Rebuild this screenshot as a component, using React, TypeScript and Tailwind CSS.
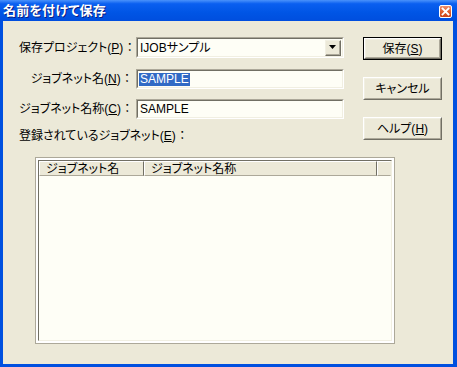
import type { ReactNode } from "react"

const ui = "font-['Liberation_Sans','Noto_Sans_CJK_JP',sans-serif] [font-feature-settings:'palt']"

function Key({ children }: { children: ReactNode }) {
  return <span className="underline underline-offset-[1px]">{children}</span>
}

function Sunken({ className, children }: { className?: string; children?: ReactNode }) {
  return (
    <div
      className={`border border-t-[#aca899] border-l-[#aca899] border-b-white border-r-white ${className ?? ""}`}
    >
      <div className="h-full border border-t-[#716f64] border-l-[#716f64] border-b-[#f1efe2] border-r-[#f1efe2] bg-[#fefef6]">
        {children}
      </div>
    </div>
  )
}

function Button({ children, isDefault }: { children: ReactNode; isDefault?: boolean }) {
  const inner = (
    <div className="h-full border border-t-white border-l-white border-b-[#716f64] border-r-[#716f64]">
      <div className="flex h-full items-center justify-center border border-t-[#f1efe2] border-l-[#f1efe2] border-b-[#aca899] border-r-[#aca899] text-[12px] text-black">
        {children}
      </div>
    </div>
  )
  return (
    <div className={`h-[23px] w-[79px] ${isDefault ? "border border-black" : ""}`}>{inner}</div>
  )
}

function FieldRow({ label, children, className }: { label: ReactNode; children: ReactNode; className?: string }) {
  return (
    <div className={`flex items-center ${className ?? ""}`}>
      <div className="w-[111px] text-right text-[12px] leading-none whitespace-nowrap text-black">{label}</div>
      <div className="ml-[6px]">{children}</div>
    </div>
  )
}

export default function App() {
  return (
    <div className={`flex h-[367px] w-[457px] flex-col bg-[#0050e0] ${ui}`}>
      <div className="flex h-[21px] items-center justify-between bg-[linear-gradient(180deg,#4a92fb_0%,#0a5ff0_18%,#0055e5_60%,#004ede_100%)] pl-[3px] pr-[5px]">
        <span className="text-[13px] font-bold leading-none tracking-[0.2px] text-white [text-shadow:1px_1px_0_#0a1e80]">
          名前を付けて保存
        </span>
        <div className="mt-[1px] flex h-[13px] w-[13px] items-center justify-center rounded-[2px] border border-white bg-[linear-gradient(180deg,#ee9070_0%,#e0602f_50%,#c8431a_100%)]">
          <svg width="9" height="9" viewBox="0 0 9 9">
            <path d="M1.5 1.5 L7.5 7.5 M7.5 1.5 L1.5 7.5" stroke="white" strokeWidth="1.8" strokeLinecap="square" />
          </svg>
        </div>
      </div>

      <div className="mb-[3px] ml-[3px] mr-[4px] flex-1 bg-[#ece9d8]">
        <div className="flex items-start pt-[16px]">
          <div className="w-[357px] pl-[16px]">
            <FieldRow
              label={
                <>
                  保存プロジェクト(<Key>P</Key>) ：
                </>
              }
            >
              <Sunken className="h-[21px] w-[208px]">
                <div className="flex h-full items-center justify-between">
                  <span className="pl-[2px] text-[12px] leading-none text-black">IJOBサンプル</span>
                  <div className="mr-px h-[16px] w-[16px] border border-t-[#f1efe2] border-l-[#f1efe2] border-b-[#716f64] border-r-[#716f64] bg-[#ece9d8]">
                    <div className="flex h-full items-center justify-center border-b border-r border-b-[#aca899] border-r-[#aca899]">
                      <svg width="7" height="4" viewBox="0 0 7 4">
                        <path d="M0 0 H7 L3.5 4 Z" fill="black" />
                      </svg>
                    </div>
                  </div>
                </div>
              </Sunken>
            </FieldRow>

            <FieldRow
              className="mt-[11px]"
              label={
                <>
                  ジョブネット名(<Key>N</Key>) ：
                </>
              }
            >
              <Sunken className="h-[20px] w-[208px]">
                <div className="flex h-full items-center pl-[1px]">
                  <span className="bg-[#316ac5] px-px text-[12px] leading-[13px] text-white">SAMPLE</span>
                </div>
              </Sunken>
            </FieldRow>

            <FieldRow
              className="mt-[10px]"
              label={
                <>
                  ジョブネット名称(<Key>C</Key>) ：
                </>
              }
            >
              <Sunken className="h-[20px] w-[208px]">
                <div className="flex h-full items-center pl-[2px]">
                  <span className="text-[12px] leading-none text-black">SAMPLE</span>
                </div>
              </Sunken>
            </FieldRow>

            <div className="mt-[10px] h-[14px] text-[12px] leading-[14px] whitespace-nowrap text-black">
              登録されているジョブネット(<Key>E</Key>) ：
            </div>
          </div>

          <div className="ml-[3px] flex flex-col gap-[17px]">
            <Button isDefault>
              保存(<Key>S</Key>)
            </Button>
            <Button>キャンセル</Button>
            <Button>
              ヘルプ(<Key>H</Key>)
            </Button>
          </div>
        </div>

        <div className="ml-[32px] mt-[14px] h-[187px] w-[360px] border border-[#aca899] bg-white p-[2px]">
          <div className="flex h-full flex-col border border-t-[#716f64] border-l-[#716f64] border-b-[#f1efe2] border-r-[#f1efe2] bg-[#fefef6]">
            <div className="flex h-[15px] text-[12px] leading-none text-black">
              <div className="flex w-[105px] items-center border border-t-white border-l-white border-b-[#aca899] border-r-[#716f64] bg-[#ece9d8] pl-[6px]">
                ジョブネット名
              </div>
              <div className="flex w-[233px] items-center border border-t-white border-l-white border-b-[#aca899] border-r-[#716f64] bg-[#ece9d8] pl-[6px]">
                ジョブネット名称
              </div>
              <div className="flex-1 border border-t-white border-l-white border-b-[#aca899] border-r-[#ece9d8] bg-[#ece9d8]" />
            </div>
            <div className="flex-1" />
          </div>
        </div>
      </div>
    </div>
  )
}
